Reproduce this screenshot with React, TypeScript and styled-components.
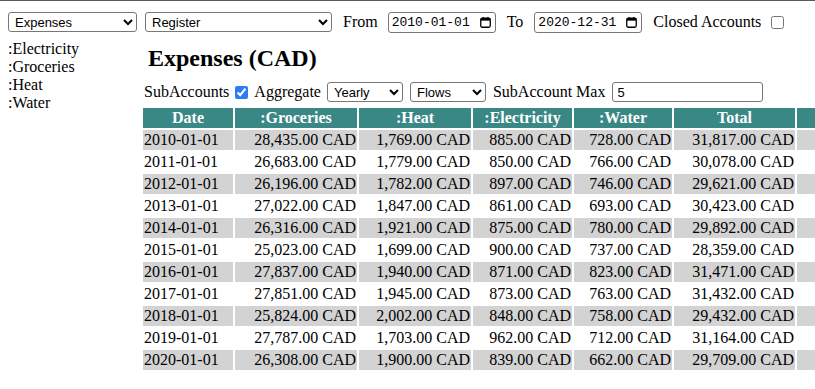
import React, { useState } from "react"
import styled, { createGlobalStyle } from "styled-components"

const GlobalStyle = createGlobalStyle`
  html, body {
    margin: 0;
    padding: 0;
    overflow: hidden;
    background: #fff;
  }
  html {
    border-top: 1px solid #5a5a5a;
  }
  body {
    font-family: "Liberation Serif", "Times New Roman", serif;
    font-size: 16px;
    color: #000;
  }
`

const Page = styled.div`
  padding: 11px 8px 0 8px;
`

const Toolbar = styled.div`
  display: flex;
  align-items: center;
  height: 20px;
  white-space: nowrap;
`

const Select = styled.select<{ width: number; gap?: number }>`
  width: ${({ width }) => width}px;
  height: 20px;
  margin-left: ${({ gap }) => gap || 0}px;
  font-family: "Liberation Sans", Arial, sans-serif;
  font-size: 13px;
  border: 1px solid #777;
  border-radius: 3px;
  background: #fff;
  color: #000;
  padding: 0 2px;
`

const Label = styled.span<{ left: number; right: number }>`
  margin-left: ${({ left }) => left}px;
  margin-right: ${({ right }) => right}px;
  line-height: 18px;
`

const DateField = styled.label`
  position: relative;
  display: inline-flex;
  width: 108px;
  height: 21px;
`

const DateInput = styled.input`
  width: 100%;
  height: 100%;
  box-sizing: border-box;
  font-family: "Liberation Mono", "DejaVu Sans Mono", monospace;
  font-size: 13px;
  border: 1px solid #777;
  border-radius: 3px;
  padding: 0 18px 0 3px;
  background: #fff;
  color: #000;
`

const CalendarIcon = styled.svg`
  position: absolute;
  right: 5px;
  top: 5px;
  pointer-events: none;
`

const Check = styled.input`
  width: 13px;
  height: 13px;
  margin: 0;
  accent-color: #2d7cf6;
`

const Body = styled.div`
  display: flex;
  align-items: flex-start;
  margin-top: 7px;
`

const Sidebar = styled.ul`
  list-style: none;
  margin: 0;
  padding: 1px 0 0 0;
  width: 133px;
  flex-shrink: 0;
  line-height: 18px;
`

const Main = styled.div`
  display: flex;
  flex-direction: column;
`

const Heading = styled.h2`
  margin: 5px 0 0 7px;
  font-size: 24px;
  line-height: 28px;
  font-weight: bold;
`

const Controls = styled.div`
  display: flex;
  align-items: center;
  height: 20px;
  margin-top: 10px;
  margin-left: 3px;
  white-space: nowrap;
`

const TextInput = styled.input`
  width: 151px;
  height: 20px;
  box-sizing: border-box;
  font-family: "Liberation Sans", Arial, sans-serif;
  font-size: 13px;
  border: 1px solid #777;
  border-radius: 3px;
  padding: 0 4px;
`

const Table = styled.table`
  border-spacing: 2px;
  margin-top: 4px;
  line-height: 18px;
`

const HeadCell = styled.th<{ w: number }>`
  width: ${({ w }) => w - 2}px;
  min-width: ${({ w }) => w - 2}px;
  padding: 1px;
  background: #3a8886;
  color: #fff;
  font-weight: bold;
  text-align: center;
`

const Row = styled.tr<{ shaded: boolean }>`
  background: ${({ shaded }) => (shaded ? "#d3d3d3" : "transparent")};
`

const Cell = styled.td<{ align?: string }>`
  padding: 1px;
  text-align: ${({ align }) => align || "right"};
  white-space: nowrap;
`

const columns = [
  { name: "Date", w: 90 },
  { name: ":Groceries", w: 122 },
  { name: ":Heat", w: 112 },
  { name: ":Electricity", w: 99 },
  { name: ":Water", w: 98 },
  { name: "Total", w: 121 },
  { name: "", w: 80 },
]

const rows: Array<[string, number, number, number, number, number]> = [
  ["2010-01-01", 28435, 1769, 885, 728, 31817],
  ["2011-01-01", 26683, 1779, 850, 766, 30078],
  ["2012-01-01", 26196, 1782, 897, 746, 29621],
  ["2013-01-01", 27022, 1847, 861, 693, 30423],
  ["2014-01-01", 26316, 1921, 875, 780, 29892],
  ["2015-01-01", 25023, 1699, 900, 737, 28359],
  ["2016-01-01", 27837, 1940, 871, 823, 31471],
  ["2017-01-01", 27851, 1945, 873, 763, 31432],
  ["2018-01-01", 25824, 2002, 848, 758, 29432],
  ["2019-01-01", 27787, 1703, 962, 712, 31164],
  ["2020-01-01", 26308, 1900, 839, 662, 29709],
]

const money = (n: number) =>
  n.toLocaleString("en-US", { minimumFractionDigits: 2, maximumFractionDigits: 2 }) + " CAD"

const accounts = [":Electricity", ":Groceries", ":Heat", ":Water"]

const DatePicker = ({ value }: { value: string }) => {
  const [v, setV] = useState(value)
  return (
    <DateField>
      <DateInput type="text" value={v} onChange={e => setV(e.target.value)} />
      <CalendarIcon width="11" height="11" viewBox="0 0 11 11">
        <rect x="0.75" y="1.25" width="9.5" height="9" rx="1.5" fill="none" stroke="#000" strokeWidth="1.3" />
        <rect x="0.75" y="1.25" width="9.5" height="2.4" fill="#000" />
        <rect x="2.5" y="0" width="1.3" height="2" fill="#000" />
        <rect x="7.2" y="0" width="1.3" height="2" fill="#000" />
      </CalendarIcon>
    </DateField>
  )
}

export default function App() {
  const [subAccounts, setSubAccounts] = useState(true)
  const [closed, setClosed] = useState(false)
  const [max, setMax] = useState("5")

  return (
    <Page>
      <GlobalStyle />
      <Toolbar>
        <Select width={129} defaultValue="Expenses">
          <option>Expenses</option>
          <option>Income</option>
          <option>Assets</option>
        </Select>
        <Select width={187} gap={8} defaultValue="Register">
          <option>Register</option>
          <option>Balance</option>
        </Select>
        <Label left={11} right={10}>From</Label>
        <DatePicker value="2010-01-01" />
        <Label left={11} right={11}>To</Label>
        <DatePicker value="2020-12-31" />
        <Label left={11} right={10}>Closed Accounts</Label>
        <Check type="checkbox" checked={closed} onChange={e => setClosed(e.target.checked)} />
      </Toolbar>
      <Body>
        <Sidebar>
          {accounts.map(a => (
            <li key={a}>{a}</li>
          ))}
        </Sidebar>
        <Main>
          <Heading>Expenses (CAD)</Heading>
          <Controls>
            <Label left={0} right={6}>SubAccounts</Label>
            <Check type="checkbox" checked={subAccounts} onChange={e => setSubAccounts(e.target.checked)} />
            <Label left={6} right={6}>Aggregate</Label>
            <Select width={76} defaultValue="Yearly">
              <option>Yearly</option>
              <option>Monthly</option>
            </Select>
            <Select width={76} gap={7} defaultValue="Flows">
              <option>Flows</option>
              <option>Balances</option>
            </Select>
            <Label left={7} right={7}>SubAccount Max</Label>
            <TextInput value={max} onChange={e => setMax(e.target.value)} />
          </Controls>
          <Table>
            <thead>
              <tr>
                {columns.map((c, i) => (
                  <HeadCell key={i} w={c.w}>{c.name}</HeadCell>
                ))}
              </tr>
            </thead>
            <tbody>
              {rows.map((r, i) => (
                <Row key={r[0]} shaded={i % 2 === 0}>
                  <Cell align="left">{r[0]}</Cell>
                  <Cell>{money(r[1])}</Cell>
                  <Cell>{money(r[2])}</Cell>
                  <Cell>{money(r[3])}</Cell>
                  <Cell>{money(r[4])}</Cell>
                  <Cell>{money(r[5])}</Cell>
                  <Cell />
                </Row>
              ))}
            </tbody>
          </Table>
        </Main>
      </Body>
    </Page>
  )
}
